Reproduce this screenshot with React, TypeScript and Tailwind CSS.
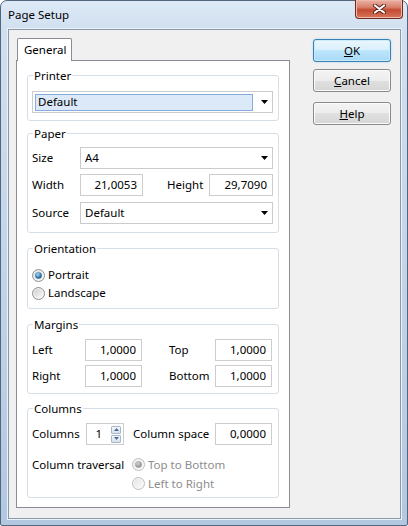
import { useId } from "react";

const font = "font-['Noto_Sans',sans-serif]";

function Radio({ checked, disabled }: { checked?: boolean; disabled?: boolean }) {
  const id = useId().replace(/:/g, "");
  const ring = disabled ? "#bdbdbd" : "#8c8e90";
  return (
    <svg width="13" height="13" viewBox="0 0 13 13" className="shrink-0">
      <defs>
        <linearGradient id={`o${id}`} x1="0" y1="0" x2="1" y2="1">
          <stop offset="0" stopColor={disabled ? "#f0f0f0" : "#e6e6e6"} />
          <stop offset="1" stopColor="#fbfbfb" />
        </linearGradient>
        <linearGradient id={`i${id}`} x1="0" y1="0" x2="1" y2="1">
          <stop offset="0" stopColor={disabled ? "#e6e6e6" : "#cfcfcf"} />
          <stop offset="1" stopColor="#fafafa" />
        </linearGradient>
        <radialGradient id={`d${id}`} cx="0.4" cy="0.35" r="0.7">
          <stop offset="0" stopColor={disabled ? "#d4d4d4" : "#a9dcf8"} />
          <stop offset="0.6" stopColor={disabled ? "#a2a2a2" : "#3a7fb5"} />
          <stop offset="1" stopColor={disabled ? "#8e8e8e" : "#1d4f7c"} />
        </radialGradient>
      </defs>
      <circle cx="6.5" cy="6.5" r="6" fill={`url(#o${id})`} stroke={ring} />
      <circle cx="6.5" cy="6.5" r="4.2" fill={`url(#i${id})`} />
      {checked && <circle cx="6.5" cy="6.5" r="3.3" fill={`url(#d${id})`} />}
    </svg>
  );
}

function Arrow() {
  return (
    <svg width="7" height="4" viewBox="0 0 7 4" className="shrink-0">
      <path d="M0 0H7L3.5 4Z" fill="#000" />
    </svg>
  );
}

function Combo({ value, focus }: { value: string; focus?: boolean }) {
  return (
    <div className="flex h-[22px] flex-1 items-center border border-[#cbcbcb] bg-white pr-[4px]">
      {focus ? (
        <div className="ml-[2px] flex h-[17px] w-[218px] items-center border border-[#85acdc] bg-[#dce9f8] pl-[2px]">
          {value}
        </div>
      ) : (
        <span className="pl-[4px]">{value}</span>
      )}
      <div className="ml-auto">
        <Arrow />
      </div>
    </div>
  );
}

function Field({ value, className }: { value: string; className: string }) {
  return (
    <div className={`flex h-[22px] items-center justify-end border border-[#cdcdcd] bg-white pr-[5px] ${className}`}>
      {value}
    </div>
  );
}

function Group({
  label,
  className,
  children,
}: {
  label: string;
  className: string;
  children: React.ReactNode;
}) {
  return (
    <div className={`relative mx-[10px] rounded-[3px] border border-[#d5dfe5] ${className}`}>
      <span className="absolute left-[5px] top-[-8px] bg-white px-[1px] leading-[16px]">{label}</span>
      {children}
    </div>
  );
}

function Button({ children, primary }: { children: React.ReactNode; primary?: boolean }) {
  return (
    <div
      className={`flex h-[23px] w-[78px] items-center justify-center rounded-[3px] border ${
        primary
          ? "border-[#3c7fb1] bg-[linear-gradient(to_bottom,#eaf6fd_0%,#d9f0fc_50%,#bee6fd_50%,#a7d9f5_100%)] shadow-[inset_0_0_0_1px_#c9ecfb,0_0_2px_#9ed4f2]"
          : "border-[#8a8a8a] bg-[linear-gradient(to_bottom,#f4f4f4_0%,#ececec_50%,#e0e0e0_50%,#d6d6d6_100%)] shadow-[inset_0_0_0_1px_#fbfbfb]"
      }`}
    >
      {children}
    </div>
  );
}

function CloseButton() {
  return (
    <div className="absolute right-[4px] top-[-1px] flex h-[19px] w-[48px] items-center justify-center rounded-b-[4px] border border-t-0 border-[#6e2a1f] bg-[linear-gradient(to_bottom,#eab3a5_0%,#d9806c_40%,#c34a32_55%,#d9775c_100%)] shadow-[inset_0_0_0_1px_#efb9ab]">
      <svg width="13" height="10" viewBox="0 0 13 10">
        <path d="M2 1.5L11 8.5M11 1.5L2 8.5" stroke="#5a2118" strokeWidth="4" strokeLinecap="round" />
        <path d="M2 1.5L11 8.5M11 1.5L2 8.5" stroke="#ffffff" strokeWidth="2.2" strokeLinecap="round" />
      </svg>
    </div>
  );
}

function Spinner() {
  const btn =
    "flex h-[8px] w-[10px] items-center justify-center rounded-[1px] border border-[#a9b8c9] bg-[linear-gradient(to_bottom,#f4f7fa,#d6e0ec)]";
  return (
    <div className="ml-[9px] mr-[2px] flex flex-col gap-[1px]">
      <div className={btn}>
        <svg width="5" height="3" viewBox="0 0 5 3">
          <path d="M0 3H5L2.5 0Z" fill="#4a6d98" />
        </svg>
      </div>
      <div className={btn}>
        <svg width="5" height="3" viewBox="0 0 5 3">
          <path d="M0 0H5L2.5 3Z" fill="#4a6d98" />
        </svg>
      </div>
    </div>
  );
}

export default function App() {
  return (
    <div className={`h-[526px] w-[408px] ${font} text-[11.5px] leading-[16px] text-black`}>
      <div className="relative flex h-full flex-col rounded-t-[7px] rounded-b-[2px] border border-[#52667d] bg-[linear-gradient(to_bottom,#dde9f6_0px,#d1e0f0_28px,#b2c8e1_100%)]">
        <div className="flex h-[28px] items-center pl-[7px]">Page Setup</div>
        <CloseButton />
        <div className="ml-[7px] mr-[6px] flex h-[490px] border border-[#8a99aa] bg-[#f0f0f0] pl-[7px] pt-[8px] shadow-[0_0_0_1px_#edf2f8]">
          <div className="flex w-[274px] flex-col">
            <div className="h-[22px]">
              <div className="relative z-10 ml-[1px] flex h-[23px] w-[55px] items-center rounded-t-[2px] border border-b-0 border-[#898c95] bg-white pl-[6px]">
                General
              </div>
            </div>
            <div className="h-[448px] border border-[#898c95] bg-white pt-[14px]">
              <Group label="Printer" className="h-[46px] pl-[4px] pr-[5px] pt-[15px]">
                <div className="flex">
                  <Combo value="Default" focus />
                </div>
              </Group>

              <Group label="Paper" className="mt-[12px] h-[100px] pl-[4px] pr-[5px] pt-[13px]">
                <div className="flex h-[22px] items-center">
                  <span className="w-[48px]">Size</span>
                  <Combo value="A4" />
                </div>
                <div className="mt-[5px] flex h-[22px] items-center">
                  <span className="w-[48px]">Width</span>
                  <Field value="21,0053" className="w-[63px]" />
                  <span className="ml-[24px] w-[42px]">Height</span>
                  <Field value="29,7090" className="flex-1" />
                </div>
                <div className="mt-[6px] flex h-[22px] items-center">
                  <span className="w-[48px]">Source</span>
                  <Combo value="Default" />
                </div>
              </Group>

              <Group label="Orientation" className="mt-[15px] h-[61px] pl-[4px] pt-[17px]">
                <div className="flex h-[18px] items-center gap-[3px]">
                  <Radio checked />
                  <span>Portrait</span>
                </div>
                <div className="flex h-[18px] items-center gap-[3px]">
                  <Radio />
                  <span>Landscape</span>
                </div>
              </Group>

              <Group label="Margins" className="mt-[15px] h-[70px] pl-[4px] pt-[14px]">
                <div className="flex h-[22px] items-center">
                  <span className="w-[53px]">Left</span>
                  <Field value="1,0000" className="w-[57px]" />
                  <span className="ml-[27px] w-[46px]">Top</span>
                  <Field value="1,0000" className="w-[57px]" />
                </div>
                <div className="mt-[4px] flex h-[22px] items-center">
                  <span className="w-[53px]">Right</span>
                  <Field value="1,0000" className="w-[57px]" />
                  <span className="ml-[27px] w-[46px]">Bottom</span>
                  <Field value="1,0000" className="w-[57px]" />
                </div>
              </Group>

              <Group label="Columns" className="mt-[14px] h-[90px] pl-[4px] pt-[14px]">
                <div className="flex h-[22px] items-center">
                  <span className="w-[54px]">Columns</span>
                  <div className="flex h-[22px] w-[38px] items-center justify-end border border-[#cdcdcd] bg-white">
                    <span>1</span>
                    <Spinner />
                  </div>
                  <span className="ml-[9px] w-[82px]">Column space</span>
                  <Field value="0,0000" className="w-[57px]" />
                </div>
                <div className="mt-[10px] flex">
                  <div className="flex h-[19px] w-[100px] items-center">Column traversal</div>
                  <div className="flex flex-col text-[#8d8d8d]">
                    <div className="flex h-[19px] items-center gap-[3px]">
                      <Radio checked disabled />
                      <span>Top to Bottom</span>
                    </div>
                    <div className="flex h-[19px] items-center gap-[3px]">
                      <Radio disabled />
                      <span>Left to Right</span>
                    </div>
                  </div>
                </div>
              </Group>
            </div>
          </div>

          <div className="ml-[23px] flex w-[78px] flex-col pt-[1px]">
            <Button primary>
              <span>
                <span className="underline">O</span>K
              </span>
            </Button>
            <div className="mt-[7px]">
              <Button>
                <span>
                  <span className="underline">C</span>ancel
                </span>
              </Button>
            </div>
            <div className="mt-[10px]">
              <Button>
                <span>
                  <span className="underline">H</span>elp
                </span>
              </Button>
            </div>
          </div>
        </div>
      </div>
    </div>
  );
}
